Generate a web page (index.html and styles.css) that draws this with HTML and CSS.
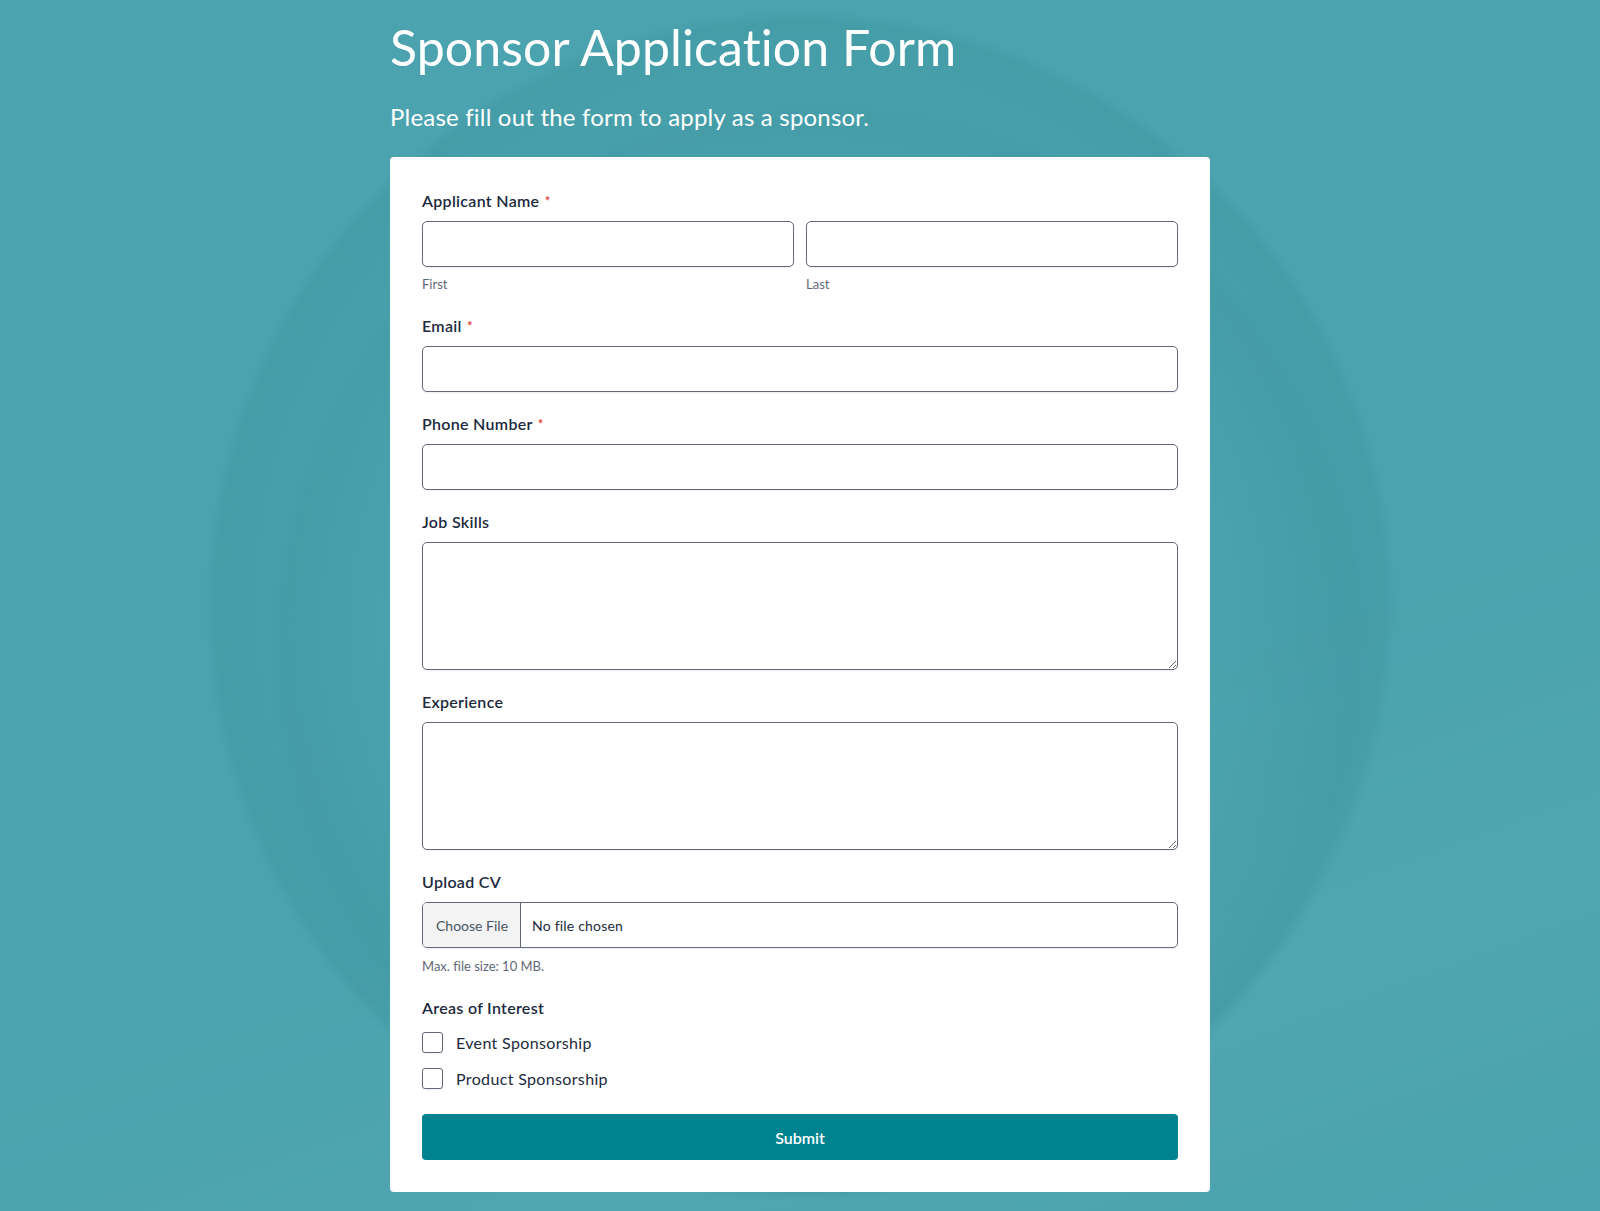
FILE: index.html
```html
<!DOCTYPE html>
<html lang="en">
<head>
    <meta charset="UTF-8">
    <meta name="viewport" content="width=device-width, initial-scale=1.0">
    <title>Sponsor Application Form</title>
    <link rel="stylesheet" href="styles.css">
</head>
<body>
    <main class="page">
        <h1 class="title">Sponsor Application Form</h1>
        <p class="subtitle">Please fill out the form to apply as a sponsor.</p>

        <form class="card" onsubmit="return false;">
            <div class="field">
                <label class="label">Applicant Name <span class="req">*</span></label>
                <div class="name-row">
                    <div class="name-col">
                        <input type="text" class="input" id="first-name">
                        <label for="first-name" class="sublabel">First</label>
                    </div>
                    <div class="name-col">
                        <input type="text" class="input" id="last-name">
                        <label for="last-name" class="sublabel">Last</label>
                    </div>
                </div>
            </div>

            <div class="field">
                <label for="email" class="label">Email <span class="req">*</span></label>
                <input type="email" class="input" id="email">
            </div>

            <div class="field">
                <label for="phone" class="label">Phone Number <span class="req">*</span></label>
                <input type="tel" class="input" id="phone">
            </div>

            <div class="field">
                <label for="skills" class="label">Job Skills</label>
                <textarea class="input textarea" id="skills"></textarea>
            </div>

            <div class="field">
                <label for="experience" class="label">Experience</label>
                <textarea class="input textarea" id="experience"></textarea>
            </div>

            <div class="field">
                <span class="label">Upload CV</span>
                <label class="file">
                    <input type="file" id="cv" hidden>
                    <span class="file-btn">Choose File</span>
                    <span class="file-name">No file chosen</span>
                </label>
                <p class="sublabel helper">Max. file size: 10 MB.</p>
            </div>

            <div class="field">
                <span class="label">Areas of Interest</span>
                <div class="checks">
                    <label class="check">
                        <input type="checkbox" class="box">
                        <span>Event Sponsorship</span>
                    </label>
                    <label class="check">
                        <input type="checkbox" class="box">
                        <span>Product Sponsorship</span>
                    </label>
                </div>
            </div>

            <button type="submit" class="submit">Submit</button>
        </form>
    </main>
</body>
</html>
```

FILE: styles.css
```css
* {
    box-sizing: border-box;
}
html, body {
    margin: 0;
    padding: 0;
}
body {
    min-height: 100vh;
    font-family: 'Lato', 'Open Sans', sans-serif;
    font-variant-ligatures: none;
    letter-spacing: 0.2px;
    color: #1c2a3d;
    background-color: #4aa3ae;
    /* soft circular swirl behind the card */
    background-image:
        radial-gradient(circle 596px at 800px 606px, rgba(0, 0, 0, 0) 380px, rgba(30, 112, 124, 0.10) 560px, rgba(30, 112, 124, 0.12) 584px, rgba(0, 0, 0, 0) 596px),
        radial-gradient(circle 550px at 820px 650px, rgba(0, 0, 0, 0) 420px, rgba(30, 112, 124, 0.06) 538px, rgba(0, 0, 0, 0) 550px),
        linear-gradient(160deg, rgba(0, 0, 0, 0) 60%, rgba(255, 255, 255, 0.03) 80%, rgba(0, 0, 0, 0) 100%);
    background-repeat: no-repeat;
}
.page {
    width: 820px;
    margin: 0 auto;
    padding: 17px 0 16px;
}
.title {
    margin: 0;
    font-size: 50px;
    line-height: 60px;
    font-weight: 400;
    letter-spacing: 0.1px;
    color: #ffffff;
}
.subtitle {
    margin: 24px 0 24px;
    font-size: 24px;
    line-height: 32px;
    font-weight: 400;
    letter-spacing: 0.2px;
    color: #ffffff;
}
.card {
    background: #ffffff;
    border-radius: 4px;
    padding: 32px;
    display: flex;
    flex-direction: column;
    gap: 20px;
}
.field {
    display: flex;
    flex-direction: column;
}
.label {
    display: block;
    font-size: 16px;
    line-height: 24px;
    font-weight: 600;
    letter-spacing: 0.3px;
    color: #1c2a3d;
    margin-bottom: 8px;
}
.req {
    color: #e0362c;
    font-size: 13px;
    margin-left: 1px;
    vertical-align: 1px;
}
.name-row {
    display: grid;
    grid-template-columns: 1fr 1fr;
    gap: 12px;
}
.name-col {
    display: flex;
    flex-direction: column;
}
.input {
    display: block;
    width: 100%;
    height: 46px;
    padding: 0 12px;
    border: 1px solid #626a7a;
    border-radius: 5px;
    background: #ffffff;
    font-family: inherit;
    font-size: 16px;
    color: #1c2a3d;
    box-shadow: 0 1px 2px rgba(17, 24, 39, 0.08);
    outline: none;
}
.textarea {
    height: 128px;
    padding: 10px 12px;
    resize: vertical;
}
.sublabel {
    display: block;
    margin: 7px 0 0;
    font-size: 13px;
    line-height: 20px;
    letter-spacing: 0;
    color: #5f6877;
}
.helper {
    margin-top: 8px;
}
.file {
    display: flex;
    align-items: stretch;
    height: 46px;
    border: 1px solid #626a7a;
    border-radius: 5px;
    overflow: hidden;
    cursor: pointer;
    box-shadow: 0 1px 2px rgba(17, 24, 39, 0.08);
}
.file-btn {
    display: flex;
    align-items: center;
    padding: 0 12px 0 13px;
    background: #f3f3f4;
    border-right: 1px solid #626a7a;
    font-size: 14px;
    letter-spacing: 0;
    color: #4b5563;
}
.file-name {
    display: flex;
    align-items: center;
    padding: 0 11px;
    font-size: 14px;
    color: #1c2a3d;
}
.checks {
    display: flex;
    flex-direction: column;
    gap: 8px;
}
.check {
    display: flex;
    align-items: center;
    gap: 13px;
    height: 28px;
    font-size: 16px;
    letter-spacing: 0.35px;
    color: #1c2a3d;
    cursor: pointer;
}
.box {
    appearance: none;
    -webkit-appearance: none;
    margin: 0;
    width: 21px;
    height: 21px;
    border: 1px solid #626a7a;
    border-radius: 3px;
    background: #ffffff;
    box-shadow: 0 1px 2px rgba(17, 24, 39, 0.08);
    cursor: pointer;
}
.box:checked {
    background: #00838f;
    border-color: #00838f;
}
.submit {
    margin-top: 2px;
    height: 46px;
    width: 100%;
    border: none;
    border-radius: 4px;
    background: #00838f;
    color: #ffffff;
    font-family: inherit;
    font-size: 16px;
    font-weight: 600;
    cursor: pointer;
}
.submit:hover {
    background: #007580;
}
```
